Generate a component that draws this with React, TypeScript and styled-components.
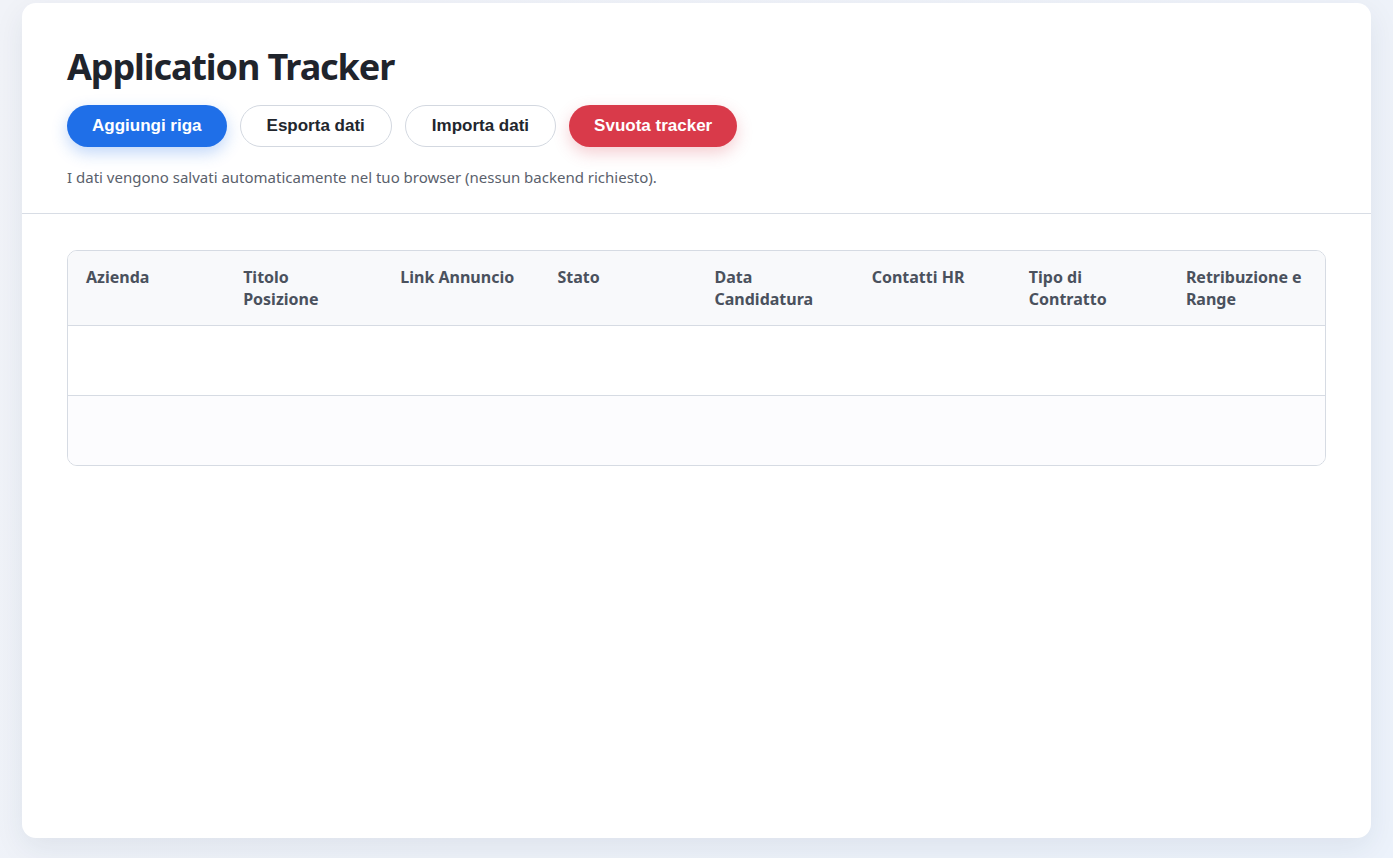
import React from "react";
import styled, { createGlobalStyle } from "styled-components";

const Global = createGlobalStyle`
  html, body { margin: 0; padding: 0; }
  body {
    background: linear-gradient(135deg, #f1f3f8 0%, #eef2f9 60%, #ecf2fb 100%);
    font-family: "Noto Sans", "Open Sans", sans-serif;
    min-height: 858px;
  }
  * { box-sizing: border-box; }
`;

const Page = styled.div`
  padding: 3px 22px 20px 22px;
`;

const Card = styled.div`
  background: #ffffff;
  border-radius: 14px;
  min-height: 835px;
  box-shadow: 0 10px 30px rgba(30, 45, 80, 0.08);
  overflow: hidden;
`;

const Header = styled.header`
  padding: 40px 45px 26px 45px;
  border-bottom: 1px solid #d8dde5;
`;

const Title = styled.h1`
  margin: 0 0 14px 0;
  font-size: 36px;
  font-weight: 700;
  letter-spacing: -1.1px;
  color: #1f242c;
  line-height: 48px;
`;

const Toolbar = styled.div`
  display: flex;
  gap: 13px;
  margin-bottom: 20px;
`;

const Button = styled.button<{ $variant?: "primary" | "danger" | "ghost" }>`
  height: 42px;
  padding: 0 ${(p) => (p.$variant === "ghost" ? "26px" : "24px")};
  border-radius: 999px;
  font-family: "Liberation Sans", Arial, sans-serif;
  font-size: 17px;
  font-weight: 700;
  cursor: pointer;
  border: 1px solid
    ${(p) => (p.$variant === "ghost" ? "#d3d8e0" : "transparent")};
  background: ${(p) =>
    p.$variant === "primary" ? "#1f6fe8" : p.$variant === "danger" ? "#d93a4a" : "#ffffff"};
  color: ${(p) => (p.$variant === "ghost" ? "#22262d" : "#ffffff")};
  box-shadow: ${(p) =>
    p.$variant === "primary"
      ? "0 6px 16px rgba(31, 111, 232, 0.28)"
      : p.$variant === "danger"
      ? "0 6px 16px rgba(217, 58, 74, 0.25)"
      : "none"};
`;

const Note = styled.p`
  margin: 0;
  font-size: 15px;
  color: #5a616c;
  line-height: 20px;
`;

const Body = styled.section`
  padding: 36px 45px;
`;

const TableWrap = styled.div`
  border: 1px solid #d6dbe3;
  border-radius: 10px;
  overflow: hidden;
`;

const Table = styled.table`
  width: 100%;
  border-collapse: collapse;
  table-layout: fixed;
`;

const Th = styled.th`
  text-align: left;
  vertical-align: top;
  padding: 15px 18px 15px 18px;
  font-size: 16px;
  font-weight: 700;
  line-height: 22px;
  color: #4a515d;
  background: #f8f9fb;
  border-bottom: 1px solid #d6dbe3;
`;

const Tr = styled.tr<{ $alt?: boolean }>`
  background: ${(p) => (p.$alt ? "#fcfcfe" : "#ffffff")};
`;

const Td = styled.td<{ $last?: boolean }>`
  height: ${(p) => (p.$last ? "69px" : "70px")};
  padding: 0 18px;
  border-bottom: ${(p) => (p.$last ? "none" : "1px solid #d6dbe3")};
`;

const columns = [
  "Azienda",
  "Titolo Posizione",
  "Link Annuncio",
  "Stato",
  "Data Candidatura",
  "Contatti HR",
  "Tipo di Contratto",
  "Retribuzione e Range",
];

export default function App() {
  return (
    <>
      <Global />
      <Page>
        <Card>
          <Header>
            <Title>Application Tracker</Title>
            <Toolbar>
              <Button $variant="primary">Aggiungi riga</Button>
              <Button $variant="ghost">Esporta dati</Button>
              <Button $variant="ghost">Importa dati</Button>
              <Button $variant="danger">Svuota tracker</Button>
            </Toolbar>
            <Note>
              I dati vengono salvati automaticamente nel tuo browser (nessun backend richiesto).
            </Note>
          </Header>
          <Body>
            <TableWrap>
              <Table>
                <thead>
                  <tr>
                    {columns.map((c) => (
                      <Th key={c}>{c}</Th>
                    ))}
                  </tr>
                </thead>
                <tbody>
                  {[0, 1].map((r) => (
                    <Tr key={r} $alt={r === 1}>
                      {columns.map((c) => (
                        <Td key={c} $last={r === 1} />
                      ))}
                    </Tr>
                  ))}
                </tbody>
              </Table>
            </TableWrap>
          </Body>
        </Card>
      </Page>
    </>
  );
}
